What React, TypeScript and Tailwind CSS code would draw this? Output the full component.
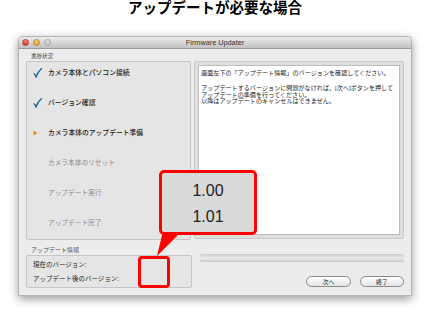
import React from "react";

type Step = { label: string; state: "done" | "current" | "todo" };

const steps: Step[] = [
  { label: "カメラ本体とパソコン接続", state: "done" },
  { label: "バージョン確認", state: "done" },
  { label: "カメラ本体のアップデート準備", state: "current" },
  { label: "カメラ本体のリセット", state: "todo" },
  { label: "アップデート実行", state: "todo" },
  { label: "アップデート完了", state: "todo" },
];

function Check() {
  return (
    <svg width="9" height="10" viewBox="0 0 9 10">
      <path d="M1 5.8 Q2.4 6.6 3 9 Q5 3.5 8.6 0.6" fill="none" stroke="#1a6690" strokeWidth="1.3" strokeLinecap="round" />
    </svg>
  );
}

function Arrow() {
  return (
    <svg width="5" height="6" viewBox="0 0 5 6">
      <polygon points="0.5,0.5 4.5,3 0.5,5.5" fill="#ef8a1e" />
    </svg>
  );
}

export default function App() {
  return (
    <div className="relative w-[430px] h-[324px] bg-white overflow-hidden font-['Liberation_Sans','Noto_Sans_CJK_JP',sans-serif]">
      <div className="h-[16px] flex items-center justify-center text-[14.5px] leading-[16px] font-bold text-black">
        アップデートが必要な場合
      </div>

      <div className="ml-[18px] mt-[20px] w-[394px] h-[260px] bg-[#ececec] rounded-t-[4px] border border-[#b4b4b4] shadow-[0_3px_10px_rgba(0,0,0,0.4)] flex flex-col overflow-hidden">
        {/* title bar */}
        <div className="h-[12px] grid grid-cols-[1fr_auto_1fr] items-center bg-gradient-to-b from-[#ebebeb] to-[#c2c2c2] border-b border-[#9c9c9c]">
          <div className="flex items-center gap-[4px] pl-[3px]">
            <span className="w-[7px] h-[7px] rounded-full bg-gradient-to-b from-[#f08a80] to-[#d2332b] border border-[#b03a32]" />
            <span className="w-[7px] h-[7px] rounded-full bg-gradient-to-b from-[#f9d07a] to-[#e49a20] border border-[#c08530]" />
            <span className="w-[7px] h-[7px] rounded-full bg-gradient-to-b from-[#e4e4e4] to-[#bdbdbd] border border-[#a8a8a8]" />
          </div>
          <div className="text-[7.3px] leading-[10px] text-[#333]">Firmware Updater</div>
          <div />
        </div>

        {/* body */}
        <div className="px-[7px] pt-[3px] flex flex-col">
          <div className="h-[8px] pl-[5px] text-[5.5px] leading-[8px] text-[#444]">進捗状況</div>
          <div className="mt-[1px] h-[179px] flex gap-[3px]">
            <div className="w-[166px] h-full bg-[#e5e5e5] border border-[#c6c6c6] rounded-[2px] flex flex-col gap-[8px] pl-[6px]">
              {steps.map((s) => (
                <div key={s.label} className="h-[22px] flex items-center gap-[5px]">
                  <div className="w-[10px] flex items-center justify-start">
                    {s.state === "done" && <Check />}
                    {s.state === "current" && <Arrow />}
                  </div>
                  <span
                    className={
                      s.state === "todo"
                        ? "text-[6.7px] leading-[8px] text-[#8c8c8c]"
                        : "text-[6.8px] leading-[8px] text-[#222] font-medium"
                    }
                  >
                    {s.label}
                  </span>
                </div>
              ))}
            </div>
            <div className="w-[211px] h-[178px] bg-[#dedede] border border-[#cacaca] rounded-[2px] p-[3px]">
              <div className="w-full h-full bg-white border border-[#bdbdbd] pl-[2px] pt-[4px] text-[6.1px] leading-[6.5px] text-[#222] whitespace-nowrap">
                <div>画面左下の「アップデート情報」のバージョンを確認してください。</div>
                <div className="h-[8.5px]" />
                <div>アップデートするバージョンに問題がなければ、[次へ]ボタンを押して</div>
                <div>アップデートの準備を行ってください。</div>
                <div>以降はアップデートのキャンセルはできません。</div>
              </div>
            </div>
          </div>

          <div className="mt-[7px] flex">
            <div className="w-[166px] flex flex-col">
              <div className="h-[7px] pl-[5px] text-[6px] leading-[7px] text-[#555]">アップデート情報</div>
              <div className="mt-[1px] h-[33px] bg-[#e5e5e5] border border-[#c6c6c6] rounded-[2px] pl-[6px] pt-[5px] flex flex-col gap-[6px] text-[6.5px] leading-[8px] text-[#222]">
                <div>現在のバージョン:</div>
                <div>アップデート後のバージョン:</div>
              </div>
            </div>
            <div className="ml-[8px] w-[205px] pt-[7px] flex flex-col">
              <div className="h-[8px] rounded-[2px] bg-gradient-to-b from-[#c9c9c9] via-[#ececec] to-[#c9c9c9]" />
              <div className="mt-[14px] flex justify-end gap-[9px]">
                <div className="w-[45px] h-[11px] rounded-full border border-[#8a8a8a] bg-gradient-to-b from-white to-[#e4e4e4] flex items-center justify-center text-[6px] leading-[8px] text-[#222]">
                  次へ
                </div>
                <div className="w-[44px] h-[11px] rounded-full border border-[#8a8a8a] bg-gradient-to-b from-white to-[#e4e4e4] flex items-center justify-center text-[6px] leading-[8px] text-[#222]">
                  終了
                </div>
              </div>
            </div>
          </div>
        </div>
      </div>

      {/* callout overlay */}
      <svg className="absolute left-[150px] top-[228px]" width="40" height="32" viewBox="0 0 40 32">
        <polygon points="13,3 32,3 7,28" fill="#ff0000" />
      </svg>
      <div className="absolute left-[159px] top-[170px] w-[98px] h-[65px] border-[3px] border-[#ff0000] rounded-[5px] bg-[#d9d9d9] flex flex-col items-center justify-center pt-[2px] text-[16px] leading-[26px] text-[#222] font-['Liberation_Sans',sans-serif]">
        <div>1.00</div>
        <div>1.01</div>
      </div>
      <div className="absolute left-[138px] top-[256px] w-[32px] h-[32px] border-[3px] border-[#ff0000] rounded-[4px]" />
    </div>
  );
}
